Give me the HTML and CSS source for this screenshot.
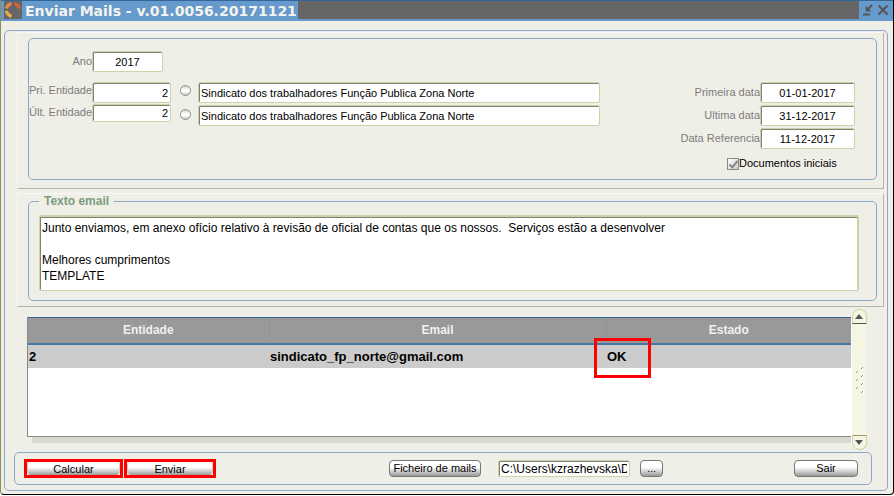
FILE: index.html
```html
<!DOCTYPE html>
<html lang="pt">
<head>
<meta charset="utf-8">
<title>Enviar Mails</title>
<link rel="stylesheet" href="styles.css">
</head>
<body>
<div class="window">
  <header class="titlebar">
    <svg class="logo" width="18" height="18" viewBox="0 0 18 18" aria-hidden="true">
      <rect width="18" height="18" fill="#666"/>
      <g fill="none" stroke-width="3">
        <path d="M7.500 2.500Q3.500 3.500 2.200 7.500" stroke="#e88a44"/>
        <path d="M10.500 2.500Q14 3.500 15.500 7.500" stroke="#d8603c"/>
        <path d="M2.200 10Q3.500 14 7.500 15.500" stroke="#e8b040"/>
      </g>
    </svg>
    <h1 class="title">Enviar Mails - v.01.0056.20171121</h1>
    <div class="titlefill"></div>
    <button class="winbtn" aria-label="Minimizar">
      <svg width="11" height="12" viewBox="0 0 11 12"><path d="M1 10.500H8M10 1L5 6M4.500 2.500V6.500H8.500" fill="none" stroke="#555" stroke-width="1.800"/></svg>
    </button>
    <button class="winbtn" aria-label="Fechar">
      <svg width="12" height="12" viewBox="0 0 12 12"><path d="M1.500 1.500L10.500 10.500M10.500 1.500L1.500 10.500" fill="none" stroke="#555" stroke-width="2"/></svg>
    </button>
  </header>

  <main class="frame">
    <section class="section">
      <div class="group params">
        <div class="col-codes">
          <label for="ano">Ano</label><input id="ano" class="field year" value="2017">
          <label for="pri">Pri. Entidade</label><input id="pri" class="field code" value="2">
          <label for="ult">Últ. Entidade</label><input id="ult" class="field code short" value="2">
        </div>
        <div class="col-lookup">
          <button class="lookup" aria-label="Procurar primeira entidade"></button>
          <button class="lookup" aria-label="Procurar última entidade"></button>
        </div>
        <div class="col-names">
          <input class="field" aria-label="Nome da primeira entidade" value="Sindicato dos trabalhadores Função Publica Zona Norte">
          <input class="field" aria-label="Nome da última entidade" value="Sindicato dos trabalhadores Função Publica Zona Norte">
        </div>
        <div class="col-dates">
          <label for="d1">Primeira data</label><input id="d1" class="field date" value="01-01-2017">
          <label for="d2">Ultima data</label><input id="d2" class="field date" value="31-12-2017">
          <label for="d3">Data Referencia</label><input id="d3" class="field date" value="11-12-2017">
          <label class="check"><input type="checkbox" checked>Documentos iniciais</label>
        </div>
      </div>
    </section>

    <section class="section mail">
      <fieldset class="group">
        <legend>Texto email</legend>
        <textarea class="field body-text" aria-label="Texto email">Junto enviamos, em anexo ofício relativo à revisão de oficial de contas que os nossos.  Serviços estão a desenvolver

Melhores cumprimentos
TEMPLATE</textarea>
      </fieldset>
    </section>

    <div class="results">
      <div class="grid-box">
        <table>
          <colgroup><col class="c1"><col class="c2"><col></colgroup>
          <thead><tr><th>Entidade</th><th>Email</th><th>Estado</th></tr></thead>
          <tbody><tr><td>2</td><td>sindicato_fp_norte@gmail.com</td><td><span class="status">OK</span></td></tr></tbody>
        </table>
      </div>
      <div class="scrollbar">
        <button class="arrow up" aria-label="Subir"><svg width="8" height="5" viewBox="0 0 8 5"><path d="M0 5L4 0L8 5Z" fill="#555"/></svg></button>
        <svg class="grip" width="9" height="27" viewBox="0 0 9 27" aria-hidden="true"><path d="M6 3L8 1M1 7L3 5M6 11L8 9M1 15L3 13M6 19L8 17M1 23L3 21M6 27L8 25" stroke="#999966" fill="none"/></svg>
        <button class="arrow down" aria-label="Descer"><svg width="8" height="5" viewBox="0 0 8 5"><path d="M0 0L4 5L8 0Z" fill="#555"/></svg></button>
      </div>
    </div>

    <footer class="actions">
      <span class="mark first"><button class="btn flat">Calcular</button></span>
      <span class="mark"><button class="btn flat">Enviar</button></span>
      <button class="btn file">Ficheiro de mails</button>
      <input class="field path" aria-label="Ficheiro" value="C:\Users\kzrazhevska\D">
      <button class="btn browse">...</button>
      <button class="btn exit">Sair</button>
    </footer>
  </main>
</div>
</body>
</html>
```

FILE: styles.css
```css
*, *::before, *::after { box-sizing: border-box; }

body {
  margin: 0;
  background: #fff;
  font: 11px/13px "Liberation Sans", Arial, sans-serif;
  color: #000;
}

button, input, textarea { font: inherit; color: inherit; margin: 0; padding: 0; }

.window {
  background: #efefe8;
  border-left: 1px solid #8f8f5c;
  border-right: 1px solid #000;
  border-bottom: 1px solid #000;
  border-radius: 0 0 4px 4px;
  padding-bottom: 3px;
}

/* Title bar */
.titlebar {
  display: flex;
  height: 21px;
  background: #6699cc;
  border-top: 1px solid #336699;
  padding: 0 2px 2px 3px;
}
.logo { flex: none; }
.title {
  margin: 0;
  padding: 0 1px 0 3px;
  font: bold 14px/20px "DejaVu Sans", Verdana, sans-serif;
  color: #f4f4ee;
  white-space: nowrap;
}
.titlefill { flex: 1; background: #666; }
.winbtn {
  display: flex;
  align-items: center;
  justify-content: center;
  width: 16px;
  border: 0;
  background: none;
}

/* Frames */
.frame {
  margin: 9px 5px 0 3px;
  border: 1px solid #8ca8c8;
  border-radius: 5px;
  padding: 1px 0 5px;
}
.section {
  margin: 0 3px 4px 12px;
  border: 1px solid #f8f8f4;
  border-right-color: #b4b4b0;
  border-bottom-color: #b4b4b0;
  padding: 5px 6px 8px 10px;
}
.group {
  border: 1px solid #8ca8c8;
  border-radius: 5px;
  margin: 0;
}

/* Fields */
.field {
  display: block;
  width: 100%;
  height: 21px;
  padding: 0 2px;
  background: #fff;
  border: 1px solid #ced2a8;
  border-radius: 2px;
  box-shadow: inset 1px 1px 0 #808074;
  outline: 0;
}

.params {
  display: flex;
  align-items: flex-start;
  padding: 12px 21px 9px 0;
}
.params label { color: #7c7c7c; text-align: right; white-space: nowrap; }
.col-codes {
  display: grid;
  grid-template-columns: 63px 79px;
  grid-template-rows: 31px 22px 18px;
}
.col-codes label { padding-top: 2px; }
.col-codes label:first-child { padding-top: 4px; }
.year { width: 71px; text-align: center; }
.code { text-align: right; }
.short { height: 18px; }

.col-lookup {
  display: flex;
  flex-direction: column;
  align-items: center;
  gap: 13px;
  width: 27px;
  padding: 34px 0 0 2px;
}
.lookup {
  width: 11px;
  height: 11px;
  border: 1px solid #8c8c8c;
  border-radius: 50%;
  background: linear-gradient(#d0d0d0, #fff 40%, #fff 60%, #c8c8c8);
}
.col-names {
  flex: 1;
  display: grid;
  gap: 2px;
  padding-top: 31px;
}
.col-dates {
  display: grid;
  grid-template-columns: 80px 95px;
  gap: 2px 0;
  align-items: center;
  margin-left: 80px;
  padding-top: 31px;
}
.date { text-align: center; }
.params .check {
  grid-column: 1 / -1;
  display: flex;
  align-items: center;
  color: #000;
  margin: 6px 0 0 47px;
}
.check input {
  appearance: none;
  width: 12px;
  height: 12px;
  border: 1px solid #888;
  background: linear-gradient(135deg, #fff, #ccc);
  position: relative;
}
.check input::after {
  content: "";
  position: absolute;
  left: 3px;
  top: 0;
  width: 5px;
  height: 9px;
  border: solid #888;
  border-width: 0 2px 2px 0;
  transform: rotate(40deg);
}

/* Mail text */
.mail { padding: 1px 6px 5px 10px; margin-bottom: 2px; }
fieldset { min-width: 0; padding: 7px 17px 9px 10px; }
legend {
  padding: 0 5px;
  font-size: 12px;
  font-weight: bold;
  color: #7c9c7c;
}
.body-text {
  height: 76px;
  padding: 3px 2px;
  font-size: 12px;
  line-height: 16px;
  border-width: 2px 2px 1px 1px;
  resize: none;
  overflow: hidden;
}

/* Results */
.results { display: flex; margin: 0 21px 2px 22px; }
.grid-box {
  flex: 1;
  height: 120px;
  margin: 8px 0 13px;
  background: #fff;
  border-left: 1px solid #888;
  border-bottom: 1px solid #888;
  box-shadow: 5px 6px 0 #d8d8d0;
}
table { width: 100%; border-collapse: collapse; table-layout: fixed; }
.c1 { width: 241px; }
.c2 { width: 337px; }
th {
  height: 26px;
  padding: 0;
  background: #999;
  color: #f0f0f0;
  font-size: 12px;
  border-top: 1px solid #336699;
  border-bottom: 2px solid #4678a8;
}
th + th { border-left: 1px solid #8c94a4; }
td {
  height: 24px;
  padding: 0 1px;
  background: #ccc;
  font-size: 13px;
  font-weight: bold;
}
.status { position: relative; }
.status::after {
  content: "";
  position: absolute;
  top: -11px;
  left: -13px;
  width: 57px;
  height: 40px;
  border: 3px solid #f00;
}
.scrollbar {
  display: flex;
  flex-direction: column;
  justify-content: space-between;
  align-items: center;
  width: 15px;
  background: #f5f5e4;
  border-left: 1px solid #fff;
  border-radius: 7px;
  z-index: 1;
}
.arrow {
  display: flex;
  align-items: center;
  justify-content: center;
  width: 15px;
  height: 15px;
  background: #f5f5e4;
  border: 1px solid #ced2a8;
}
.up { border-radius: 7px 7px 0 0; border-bottom-color: #555; }
.down { border-radius: 0 0 7px 7px; border-top-color: #999966; }

/* Action bar */
.actions {
  display: flex;
  align-items: center;
  height: 33px;
  margin: 0 15px 0 9px;
  padding: 0 13px 0 9px;
  border: 1px solid #8ca8c8;
  border-radius: 5px;
}
.btn {
  height: 17px;
  border: 1px solid #777;
  border-radius: 4px;
  background: linear-gradient(#fff 40%, #d8d8d8 65%, #999);
  line-height: 13px;
  white-space: nowrap;
}
.mark { display: flex; width: 92px; border: 3px solid #f00; }
.mark.first { width: 99px; margin-right: 1px; }
.flat { flex: 1; height: 13px; border-width: 0 1px; border-color: #ccc; line-height: 12px; }
.file { width: 92px; margin-left: 173px; }
.path { width: 132px; height: 17px; margin-left: 17px; font-size: 12px; }
.browse { width: 23px; margin-left: 10px; }
.exit { width: 64px; margin-left: auto; }
```
